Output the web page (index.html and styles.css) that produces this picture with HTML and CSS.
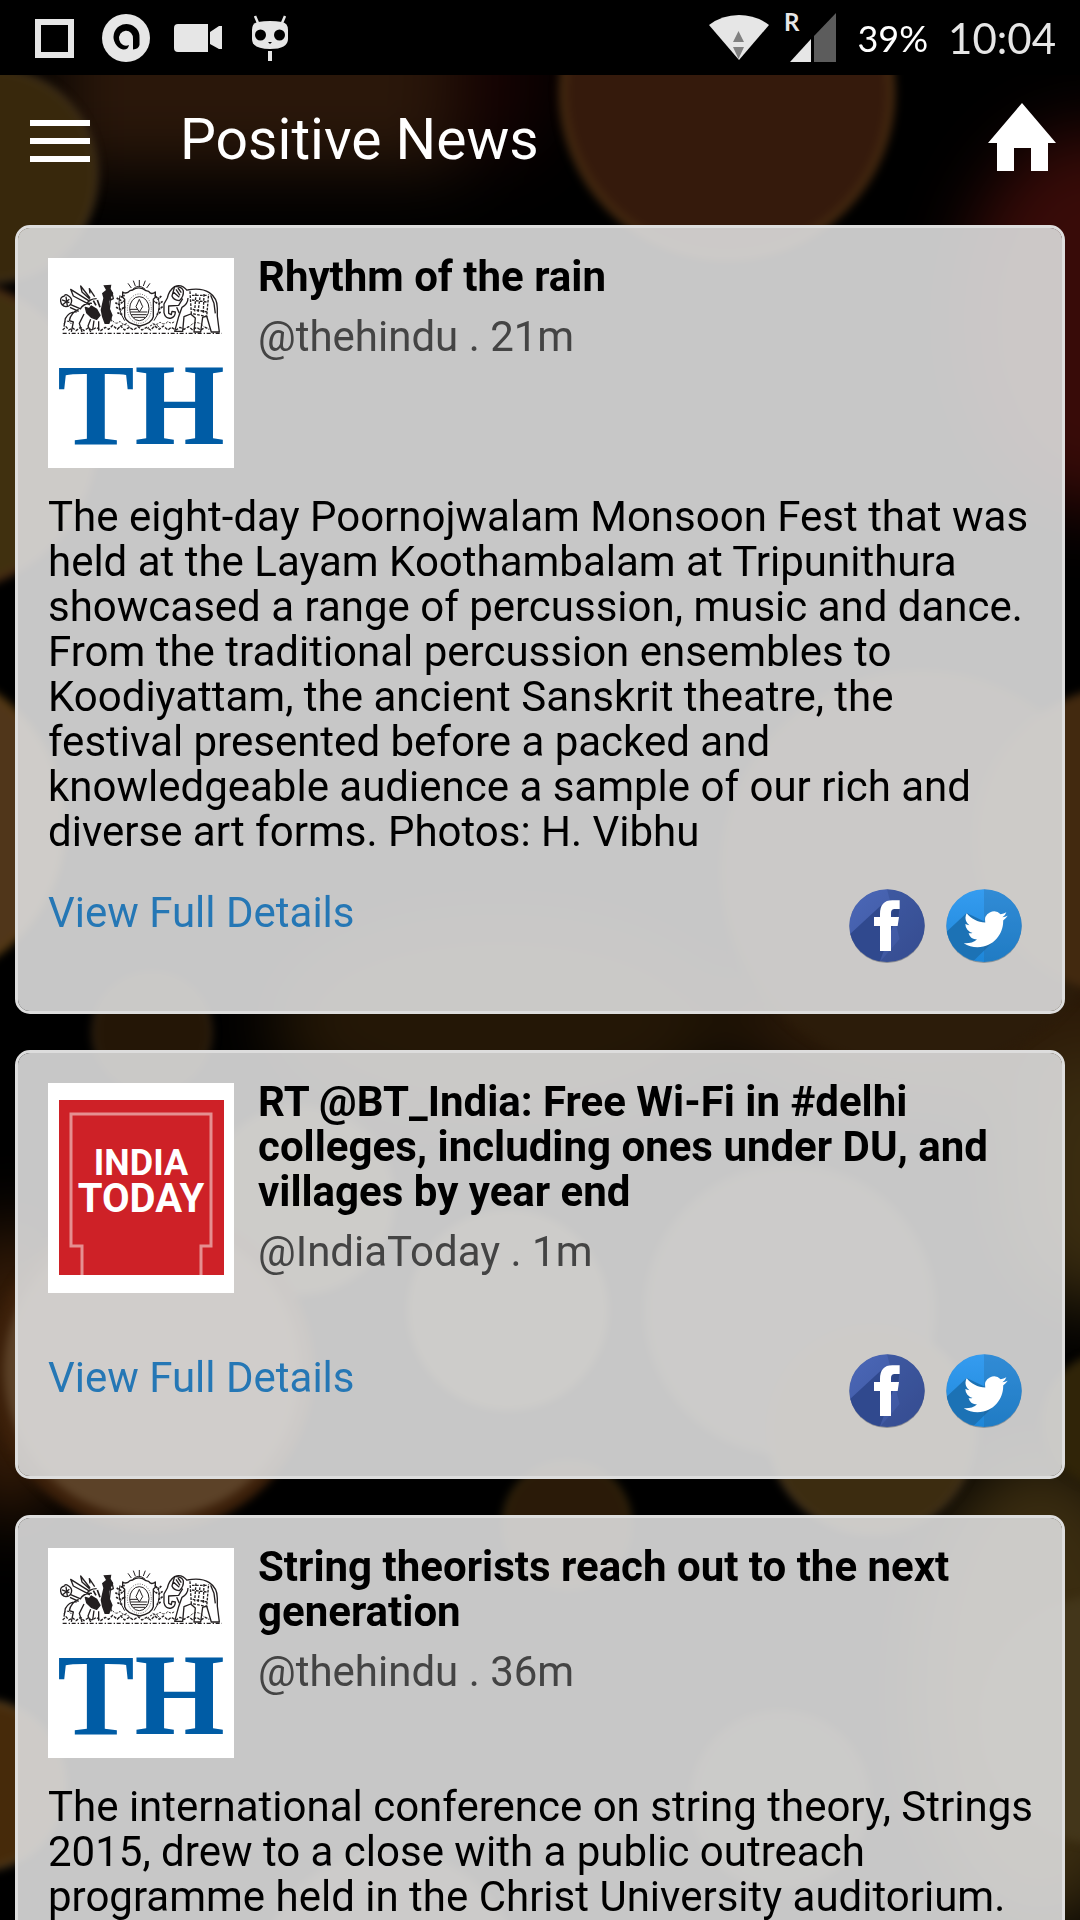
FILE: index.html
```html
<!DOCTYPE html>
<html lang="en">
<head>
<meta charset="utf-8">
<meta name="viewport" content="width=device-width, initial-scale=1">
<title>Positive News</title>
<link rel="stylesheet" href="styles.css">
</head>
<body>
<svg class="backdrop" viewBox="0 0 1080 1920" preserveAspectRatio="xMidYMid slice" aria-hidden="true">
  <defs>
    <filter id="soft" x="-20%" y="-20%" width="140%" height="140%" color-interpolation-filters="sRGB"><feGaussianBlur stdDeviation="4"/></filter>
    <filter id="haze" x="-50%" y="-50%" width="200%" height="200%" color-interpolation-filters="sRGB"><feGaussianBlur stdDeviation="34"/></filter>
  </defs>
  <rect width="1080" height="1920" fill="#000"/>
  <g filter="url(#haze)">
    <rect x="60" y="-60" width="400" height="230" fill="#2a170a"/>
    <ellipse cx="500" cy="80" rx="50" ry="80" fill="#140202"/>
    <ellipse cx="1090" cy="320" rx="130" ry="190" fill="#380b08"/>
    <ellipse cx="500" cy="1020" rx="230" ry="110" fill="#241706"/>
    <ellipse cx="960" cy="1020" rx="230" ry="90" fill="#2c1a08"/>
    <ellipse cx="10" cy="1370" rx="60" ry="150" fill="#3a1e08"/>
    <ellipse cx="1090" cy="1180" rx="90" ry="130" fill="#3a2c10"/>
    <ellipse cx="1040" cy="1690" rx="130" ry="240" fill="#3a2c10"/>
  </g>
  <g filter="url(#soft)">
    <circle cx="-60" cy="435" r="155" fill="#40300f" stroke="#4a2c14" stroke-width="6"/>
    <circle cx="-10" cy="175" r="106" fill="#38280c" stroke="#40301a" stroke-width="5"/>
    <circle cx="727" cy="92" r="164" fill="#351a0c" stroke="#42270f" stroke-width="9"/>
    <circle cx="-95" cy="825" r="158" fill="#50361a" stroke="#5a3d12" stroke-width="5"/>
    <circle cx="920" cy="870" r="200" fill="#2c1c0a"/>
    <circle cx="1130" cy="840" r="155" fill="#42290f"/>
    <circle cx="152" cy="1032" r="58" fill="#241606" stroke="#2e2010" stroke-width="5"/>
    <circle cx="300" cy="1200" r="95" fill="#42361c"/>
    <circle cx="508" cy="1310" r="98" fill="#43381f" stroke="#4e4228" stroke-width="4"/>
    <circle cx="790" cy="1310" r="146" fill="#342c1e"/>
    <circle cx="152" cy="1370" r="155" fill="#5c4228" stroke="#3c200a" stroke-width="14"/>
    <circle cx="567" cy="1525" r="63" fill="#2a1a08" stroke="#33260c" stroke-width="4"/>
    <circle cx="872" cy="1430" r="103" fill="#3c2c10" stroke="#4a3820" stroke-width="4"/>
    <circle cx="1110" cy="1420" r="68" fill="#302408"/>
    <circle cx="1105" cy="1720" r="125" fill="#43361a"/>
    <circle cx="780" cy="1800" r="90" fill="#302818"/>
    <circle cx="-20" cy="1785" r="84" fill="#462a0a" stroke="#5a4424" stroke-width="4"/>
    <circle cx="390" cy="1980" r="130" fill="#382e20"/>
  </g>
</svg>

<svg class="symbols" aria-hidden="true">
  <defs>
    <linearGradient id="fb-blue" x1="0" y1="0" x2="1" y2="1"><stop offset="0" stop-color="#4b68b8"/><stop offset="1" stop-color="#3b5299"/></linearGradient>
    <linearGradient id="tw-blue" x1="0" y1="0" x2="0" y2="1"><stop offset="0" stop-color="#359cf0"/><stop offset="1" stop-color="#1d86d8"/></linearGradient>
    <clipPath id="disc"><ellipse cx="114" cy="110" rx="113" ry="109"/></clipPath>
    <symbol id="facebook" viewBox="0 0 228 222">
      <ellipse cx="114" cy="112" rx="113" ry="110" fill="#8b8d94"/>
      <g clip-path="url(#disc)">
        <rect width="228" height="222" fill="url(#fb-blue)"/>
        <path d="M0 138 100 46 151 58 91 222H0Z" fill="#30498e"/>
        <path d="M126 78 151 58 148 84Z" fill="#30498e"/>
        <path d="M114 0H228V222H90L152 150Z" fill="#22356f" fill-opacity=".22"/>
      </g>
      <path d="M152 34H130Q93 34 93 75V84H75V111H93V186H126V111H146L150 84H126V72Q126 60 137 60H152Z" fill="#fff"/>
    </symbol>
    <symbol id="twitter" viewBox="0 0 228 222">
      <ellipse cx="114" cy="112" rx="113" ry="110" fill="#8b959c"/>
      <g clip-path="url(#disc)">
        <rect width="228" height="222" fill="url(#tw-blue)"/>
        <path d="M0 130 62 72 120 100 150 150 76 222H0Z" fill="#1c72b5"/>
        <path d="M114 0H228V222H114Z" fill="#265a86" fill-opacity=".25"/>
      </g>
      <path transform="translate(53 55) scale(5.5)" fill="#fff" d="M23.953 4.57a10 10 0 01-2.825.775 4.958 4.958 0 002.163-2.723c-.951.555-2.005.959-3.127 1.184a4.92 4.92 0 00-8.384 4.482C7.69 8.095 4.067 6.13 1.64 3.162a4.822 4.822 0 00-.666 2.475c0 1.71.87 3.213 2.188 4.096a4.904 4.904 0 01-2.228-.616v.06a4.923 4.923 0 003.946 4.827 4.996 4.996 0 01-2.212.085 4.936 4.936 0 004.604 3.417 9.867 9.867 0 01-6.102 2.105c-.39 0-.779-.023-1.17-.067a13.995 13.995 0 007.557 2.209c9.053 0 13.998-7.496 13.998-13.985 0-.21 0-.42-.015-.63A9.935 9.935 0 0024 4.59z"/>
    </symbol>
    <symbol id="crest" viewBox="0 0 186 84">
      <g transform="translate(-4 12) scale(.3333)" fill="none" stroke="#231f20" stroke-width="4" stroke-linejoin="round">
        <!-- griffin -->
        <path d="M62 78q-14 2-12 16t16 16q12 0 16-12t-8-20-12 0M54 90l22 8M56 104l20-16M66 80l4 28M80 104l28 12M78 112l26 12"/>
        <path d="M134 92 80 58l8 20 42 22M138 84 110 48l4 18 24 22M152 80 136 56l2 14M126 104q10-18 32-18M108 118q12-20 36-18"/>
        <path d="M124 112l12 4 6-8 16 10 10 18-10 12-16-6-14-14Z" fill="#231f20"/>
        <path d="M128 100l10 4M148 92l8 14M160 90l8 22M142 122l8-8" stroke-width="5"/>
        <path d="M178 46l24-2-2 12 8 14-12 22 0 20 10 24-10 26h-14l-8-22-4-20 8-36-4-14 12-10Z" fill="#231f20" stroke="none"/>
        <path d="M194 60l10 8 4 18-12 6M200 84l-4 34 6 36"/>
        <path d="M104 118q-24 10-28 34l12 4-6 30M120 132l-14 28 8 26M140 148l-8 20 8 18M98 126q-22-2-34 20l-4 24M164 154v28M150 152l-4 28"/>
        <!-- shield with sunrise -->
        <path d="M236 66q12 8 22-4l8-2q20-14 40 2l8 2q8 12 20 2l0 16-6 6v52q-4 20-40 28-42-8-46-28V88l-6-6Z"/>
        <ellipse cx="286" cy="116" rx="29" ry="36" stroke-width="3"/>
        <ellipse cx="286" cy="116" rx="36" ry="44" stroke-width="2" stroke-dasharray="3 4"/>
        <path d="M286 88l-10 22 10 16 10-16ZM258 118l24 0M260 126h50M262 134h46M268 142h36" stroke-width="3"/>
        <path d="M266 58q18-18 38 0M286 48V30M274 48l-6-16M298 48l6-16M262 54 252 40M308 54l10-14" stroke-width="3"/>
        <!-- laurel branches -->
        <path d="M228 76q-10 40 14 76M342 82q12 36-12 70" stroke-width="3"/>
        <path d="M218 84l14 8M214 98l16 8M216 112l18 8M220 128l16 6M230 82l12-6M230 100l12-8M234 116l10-6M352 78l-12 12M356 94l-14 10M356 110l-14 10M350 126l-12 8M340 84l-8-8M340 100l-10-6" stroke-width="5" stroke-dasharray="7 2"/>
        <!-- elephant -->
        <path d="M430 62q-18-22-38-12-16 10-22 34l-10 18 0 26q4 20 22 16 12-4 12-18l-10-2-2 10-8-4V108l30-2 12-20"/>
        <path d="M392 50q20-2 26 12 2 18-12 30-18-2-22-14ZM396 58l12 18M388 66l18 16M402 54l10 14"/>
        <path d="M430 60q42-8 66 8 24 16 24 46v24l6 48h-24l-14-48-12 4-6 44h-20l4-42-14-12-20 8-4 44h-24l12-44 10-28q18-10 18-28"/>
        <path d="M438 64l4 66 46 10 6-68M444 76h46M444 90l44 6M446 118l44 8M456 70l-4 54M468 82l-6 44M480 72l-2 56" stroke-dasharray="8 4"/>
        <path d="M500 76l10 24 4 30M398 112l8 18"/>
        <!-- foliage -->
        <path d="M56 180l10-10 8 10 12-6 10 8 14-10 10 10 12-8 12 6 14-8 12 10 14-10 10 6 12-12 14 12 10-10 12 12 14-8 12 8 14-10 12 10 14-8 12 8 12-12 14 10 12-10 14 12 10-8 14 8 12-8 12 6 14-8 12 10 12-8 12 8 14-8 12 6" stroke-dasharray="9 4"/>
        <path d="M56 190H534" stroke-dasharray="12 6 4 5"/>
        <path d="M60 160q10-14 22 2M206 152q10 14 22 2 10 14 20 6M326 160q12 8 22-4 12 12 24-2 10 10 20 0M440 166q20-18 40 4M222 176q20-24 40 0M310 176q20-24 40 0" stroke-width="3" stroke-dasharray="7 4"/>
      </g>
    </symbol>
  </defs>
</svg>

<div class="app">
  <div class="status">
    <div class="status-group">
      <svg class="status-icon" viewBox="0 0 48 48"><path d="M8 8H41V41H8Z" fill="none" stroke="#e6e6e6" stroke-width="6"/></svg>
      <svg class="status-icon" viewBox="0 0 48 48"><circle cx="24" cy="24" r="24" fill="#e6e6e6"/><path d="M27 31Q26 36 21 35.500A13 13 0 1 1 37.500 24V31Q36.500 35 31 35.500V25A7 7.500 0 1 0 27 31Z" fill="#000"/></svg>
      <svg class="status-icon" viewBox="0 0 48 48"><path d="M4 10H34V38H4Q0 38 0 34V14Q0 10 4 10ZM36 18 45 12H48V35H45L36 30Z" fill="#e6e6e6"/></svg>
      <svg class="status-icon" viewBox="0 0 48 48"><path d="M12 8Q24 6 36 8 42 9 42 16V25Q42 35 24 35T6 25V16Q6 9 12 8Z" fill="#e6e6e6"/><path d="M9 2 12 9M39 2 36 9" stroke="#e6e6e6" stroke-width="2.500"/><path d="M22 37h4V47h-4Z" fill="#e6e6e6"/><circle cx="14.500" cy="21" r="5.500"/><circle cx="33.500" cy="21" r="5.500"/><path d="M22 28h4l-2 2Z"/></svg>
    </div>
    <div class="status-group status-right">
      <svg class="wifi" viewBox="0 0 60 48"><path d="M0 11Q13 1 30 1T60 11L30 46Z" fill="#e6e6e6"/><path d="M29.500 17 35 28H24ZM24 33H35L29.500 45Z" fill="#808080"/></svg>
      <svg class="signal" viewBox="0 0 52 50"><text class="roaming" x="-1" y="18">R</text><path d="M5 49 26 26V49Z" fill="#e6e6e6"/><path d="M29 23 51 0V49H29Z" fill="#5c5c5c"/></svg>
      <span class="battery">39%</span>
      <span class="clock">10:04</span>
    </div>
  </div>

  <header class="bar">
    <button class="icon-button" type="button" aria-label="Menu"><svg class="menu-icon" viewBox="0 0 60 42"><path d="M0 0H60V6H0ZM0 18H60V24H0ZM0 36H60V42H0Z" fill="#fff"/></svg></button>
    <h1 class="bar-title">Positive News</h1>
    <a class="home" href="#" aria-label="Home"><svg class="home-icon" viewBox="0 0 68 68"><path d="M34 0 68 40H60V68H43V45H26V68H9V40H0Z" fill="#fff"/></svg></a>
  </header>

  <main class="feed">
    <article class="card">
      <div class="card-head">
        <svg class="avatar" viewBox="0 0 186 210" role="img" aria-label="The Hindu">
          <use href="#crest" width="186" height="84"/>
          <text class="hindu-mark" x="93" y="186">TH</text>
        </svg>
        <div class="card-heading">
          <h2 class="card-title">Rhythm of the rain</h2>
          <p class="card-meta">@thehindu . 21m</p>
        </div>
      </div>
      <p class="card-body">The eight-day Poornojwalam Monsoon Fest that was held at the Layam Koothambalam at Tripunithura showcased a range of percussion, music and dance. From the traditional percussion ensembles to Koodiyattam, the ancient Sanskrit theatre, the festival presented before a packed and knowledgeable audience a sample of our rich and diverse art forms. Photos: H. Vibhu</p>
      <div class="card-foot">
        <a class="details" href="#">View Full Details</a>
        <div class="share">
          <a class="share-link" href="#" aria-label="Share on Facebook"><svg class="share-icon"><use href="#facebook"/></svg></a>
          <a class="share-link" href="#" aria-label="Share on Twitter"><svg class="share-icon"><use href="#twitter"/></svg></a>
        </div>
      </div>
    </article>

    <article class="card">
      <div class="card-head">
        <svg class="avatar" viewBox="0 0 186 210" role="img" aria-label="India Today">
          <rect x="11" y="17" width="165" height="175" fill="#ce2127"/>
          <path d="M34 192V163H23V31H163V163H153V192" fill="none" stroke="#e58f90" stroke-width="3"/>
          <text class="today-mark today-small" x="93" y="92">INDIA</text>
          <text class="today-mark" x="93" y="129">TODAY</text>
        </svg>
        <div class="card-heading">
          <h2 class="card-title">RT @BT_India: Free Wi-Fi in #delhi colleges, including ones under DU, and villages by year end</h2>
          <p class="card-meta">@IndiaToday . 1m</p>
        </div>
      </div>
      <p class="card-body"></p>
      <div class="card-foot">
        <a class="details" href="#">View Full Details</a>
        <div class="share">
          <a class="share-link" href="#" aria-label="Share on Facebook"><svg class="share-icon"><use href="#facebook"/></svg></a>
          <a class="share-link" href="#" aria-label="Share on Twitter"><svg class="share-icon"><use href="#twitter"/></svg></a>
        </div>
      </div>
    </article>

    <article class="card">
      <div class="card-head">
        <svg class="avatar" viewBox="0 0 186 210" role="img" aria-label="The Hindu">
          <use href="#crest" width="186" height="84"/>
          <text class="hindu-mark" x="93" y="186">TH</text>
        </svg>
        <div class="card-heading">
          <h2 class="card-title">String theorists reach out to the next generation</h2>
          <p class="card-meta">@thehindu . 36m</p>
        </div>
      </div>
      <p class="card-body">The international conference on string theory, Strings 2015, drew to a close with a public outreach programme held in the Christ University auditorium.</p>
    </article>
  </main>
</div>
</body>
</html>
```

FILE: styles.css
```css
* {
  box-sizing: border-box;
}

body {
  margin: 0;
  background: #000;
  color: #000;
  font-family: Roboto, "Liberation Sans", sans-serif;
  font-size: 42px;
  line-height: 45px;
}

h1,
h2,
p {
  margin: 0;
}

a {
  text-decoration: none;
}

svg {
  display: block;
}

.backdrop {
  position: fixed;
  inset: 0;
  z-index: -1;
  width: 100%;
  height: 100%;
}

.symbols {
  position: absolute;
  width: 0;
  height: 0;
}

.app {
  display: flex;
  flex-direction: column;
  height: 100vh;
}

/* Status bar */
.status {
  display: flex;
  flex: none;
  justify-content: space-between;
  height: 75px;
  padding: 0 24px 0 30px;
  background: #000;
  color: #e6e6e6;
  font-family: Lato, sans-serif;
}

.status-group {
  display: flex;
  align-items: center;
  gap: 24px;
}

.status-right {
  gap: 16px;
}

.status-icon {
  width: 48px;
  height: 48px;
}

.wifi {
  width: 60px;
  height: 48px;
}

.signal {
  width: 52px;
  height: 50px;
  overflow: visible;
}

.roaming {
  fill: #e6e6e6;
  font-size: 24px;
  font-weight: 700;
}

.battery {
  padding: 2px 4px 0;
  color: #fff;
  font-size: 36px;
}

.clock {
  padding-top: 2px;
  font-size: 42px;
}

/* Title bar */
.bar {
  display: flex;
  flex: none;
  align-items: center;
  height: 150px;
  padding: 0 24px 20px 30px;
}

.icon-button {
  padding: 2px 0 0;
  border: 0;
  background: none;
  cursor: pointer;
}

.menu-icon {
  width: 60px;
  height: 42px;
}

.bar-title {
  flex: 1;
  padding-left: 90px;
  color: #fff;
  font-size: 57px;
  font-weight: 400;
  line-height: 64px;
}

.home {
  padding-bottom: 6px;
}

.home-icon {
  width: 68px;
  height: 68px;
}

/* Feed */
.feed {
  flex: 1;
  min-height: 0;
  padding: 0 15px;
  overflow-y: auto;
  scrollbar-width: none;
}

.card {
  margin-bottom: 36px;
  padding: 26px 24px 48px 30px;
  border: 3px solid #dddddd;
  border-radius: 15px;
  background: rgba(221, 221, 221, 0.9);
  background-clip: padding-box;
}

.card-head {
  display: flex;
  gap: 24px;
}

.avatar {
  flex: none;
  width: 186px;
  height: 210px;
  margin-top: 4px;
  background: #fff;
}

.hindu-mark {
  fill: #005ca5;
  font-family: "Liberation Serif", serif;
  font-size: 116px;
  font-weight: 700;
  text-anchor: middle;
}

.today-mark {
  fill: #fff;
  font-size: 40px;
  font-weight: 700;
  text-anchor: middle;
}

.today-small {
  font-size: 36px;
}

.card-title {
  font-size: 42px;
  font-weight: 700;
  line-height: 45px;
}

.card-meta {
  margin-top: 15px;
  color: #444;
}

.card-body {
  margin-top: 26px;
}

.card-foot {
  display: flex;
  justify-content: space-between;
  align-items: flex-start;
  padding-top: 36px;
}

.details {
  color: #2577b5;
}

.share {
  display: flex;
  gap: 21px;
  margin-top: -1px;
  padding-right: 16px;
}

.share-icon {
  width: 76px;
  height: 74px;
}
```
